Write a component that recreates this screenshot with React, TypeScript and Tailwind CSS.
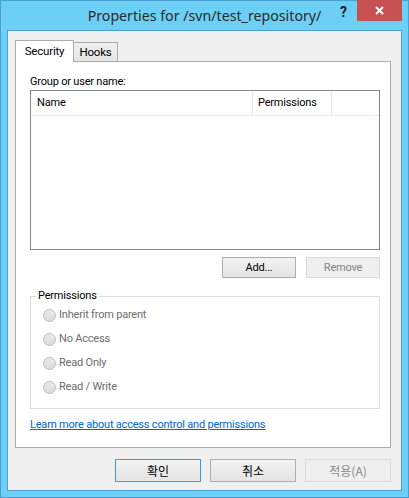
import React from 'react';

const font = { fontFamily: 'Roboto, "Noto Sans CJK KR", sans-serif' };

function Radio({ label }: { label: string }) {
  return (
    <div className="flex h-[24px] items-center">
      <span className="h-[13px] w-[13px] rounded-full border border-[#bcbcbc] bg-gradient-to-b from-[#e9e9e9] to-[#dcdcdc]" />
      <span className="ml-[3px] text-[#6d6d6d]">{label}</span>
    </div>
  );
}

function DlgButton({ label, kind }: { label: string; kind: 'default' | 'normal' | 'disabled' }) {
  const cls =
    kind === 'default'
      ? 'border-[#3c9ae0] text-black bg-gradient-to-b from-[#f2f2f2] to-[#e4e4e4]'
      : kind === 'normal'
      ? 'border-[#adadad] text-black bg-gradient-to-b from-[#f2f2f2] to-[#e4e4e4]'
      : 'border-[#d9d9d9] text-[#8a8a8a] bg-[#efefef]';
  return (
    <div
      className={`flex h-[23px] w-[86px] items-center justify-center border text-[12px] tracking-normal ${cls}`}
      style={{ fontFamily: '"Noto Sans CJK KR", sans-serif' }}
    >
      {label}
    </div>
  );
}

export default function App() {
  return (
    <div
      className="flex h-[498px] w-[409px] flex-col border border-[#4a9fd0] bg-[#6ccff6] px-[6px] pb-[6px] text-[11px] leading-[16px] tracking-[-0.2px] text-black"
      style={font}
    >
      {/* title bar */}
      <div className="relative flex h-[29px] shrink-0 items-center justify-center">
        <span className="text-[14.2px] tracking-normal text-[#2b2b2b]" style={{ fontFamily: '"Noto Sans", sans-serif' }}>
          Properties for /svn/test_repository/
        </span>
        <span className="absolute left-[333px] top-[3px] text-[14px] font-bold text-[#1e1e1e]">?</span>
        <div className="absolute right-0 top-[-1px] flex h-[21px] w-[45px] items-center justify-center bg-[#c75050]">
          <svg width="9" height="9" viewBox="0 0 9 9">
            <path d="M1 1L8 8M8 1L1 8" stroke="#fff" strokeWidth="2" />
          </svg>
        </div>
      </div>

      {/* client area */}
      <div className="flex flex-1 flex-col border border-[#4f9fd3] bg-[#f0f0f0] pl-[7px] pr-[10px] pt-[9px]">
        {/* tabs */}
        <div className="flex h-[21px] items-end">
          <div className="relative z-10 -mb-px flex h-[22px] w-[59px] items-start justify-center border-l border-r border-t border-[#acacac] bg-white pt-[2px] text-[11.5px]">
            Security
          </div>
          <div className="flex h-[19px] w-[44px] items-center justify-center border-r border-t border-[#acacac] bg-gradient-to-b from-[#f0f0f0] to-[#e5e5e5] text-[11.5px]">
            Hooks
          </div>
        </div>

        {/* panel */}
        <div className="flex h-[387px] flex-col border border-[#acacac] bg-white pl-[14px] pr-[10px] pt-[12px]">
          <div>Group or user name:</div>
          <div className="flex h-[160px] flex-col border border-[#828790]">
            <div className="flex h-[25px] border-b border-[#e1eaf5]">
              <div className="flex w-[222px] items-center border-r border-[#e5e5e5] pl-[6px]">Name</div>
              <div className="flex w-[79px] items-center border-r border-[#e5e5e5] pl-[5px]">Permissions</div>
              <div className="flex-1" />
            </div>
          </div>

          <div className="mt-[7px] flex justify-end gap-[10px]">
            <div className="flex h-[21px] w-[74px] items-center justify-center border border-[#adadad] bg-gradient-to-b from-[#f2f2f2] to-[#e4e4e4]">
              Add...
            </div>
            <div className="flex h-[21px] w-[74px] items-center justify-center border border-[#d9d9d9] bg-[#efefef] text-[#838383]">
              Remove
            </div>
          </div>

          <fieldset className="mt-[10px] h-[121px] border border-[#dcdcdc] pl-[5px]">
            <legend className="px-[2px]">Permissions</legend>
            <div className="-mt-px ml-[7px] flex flex-col">
              <Radio label="Inherit from parent" />
              <Radio label="No Access" />
              <Radio label="Read Only" />
              <Radio label="Read / Write" />
            </div>
          </fieldset>

          <div className="mt-[8px]">
            <span className="text-[#0066cc] underline">Learn more about access control and permissions</span>
          </div>
        </div>

        {/* dialog buttons */}
        <div className="mt-[11px] flex justify-end gap-[9px]">
          <DlgButton label="확인" kind="default" />
          <DlgButton label="취소" kind="normal" />
          <DlgButton label="적용(A)" kind="disabled" />
        </div>
      </div>
    </div>
  );
}
